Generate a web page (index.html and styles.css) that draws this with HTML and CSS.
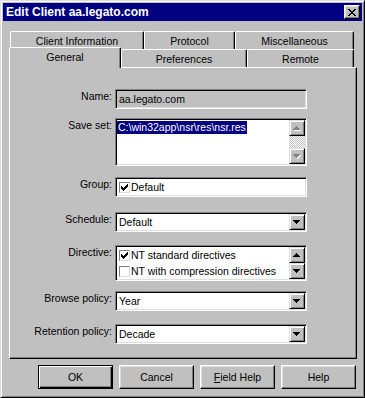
FILE: index.html
```html
<!DOCTYPE html>
<html lang="en">
<head>
    <meta charset="UTF-8">
    <title>Edit Client aa.legato.com</title>
    <link rel="stylesheet" href="styles.css">
</head>
<body>

<div class="window">
    <!-- Barra de titulo -->
    <div class="titlebar">
        <span class="title">Edit Client aa.legato.com</span>
        <span class="close">
            <svg width="8" height="7" viewBox="0 0 8 7" shape-rendering="crispEdges"><path d="M0 0h2v1H0z M6 0h2v1H6z M1 1h2v1H1z M5 1h2v1H5z M2 2h4v1H2z M3 3h2v1H3z M2 4h4v1H2z M1 5h2v1H1z M5 5h2v1H5z M0 6h2v1H0z M6 6h2v1H6z" fill="#000"/></svg>
        </span>
    </div>

    <!-- Pestanas -->
    <div class="tabs">
        <div class="tab-row back">
            <div class="tab t-client">Client Information</div>
            <div class="tab t-protocol">Protocol</div>
            <div class="tab t-misc">Miscellaneous</div>
        </div>
        <div class="tab-row front">
            <div class="tab t-general selected">General</div>
            <div class="tab t-prefs">Preferences</div>
            <div class="tab t-remote">Remote</div>
        </div>
    </div>

    <!-- Panel del formulario -->
    <div class="panel">
        <div class="row r-name">
            <div class="label">Name:</div>
            <div class="field disabled"><span class="value">aa.legato.com</span></div>
        </div>

        <div class="row r-saveset">
            <div class="label">Save set:</div>
            <div class="field list">
                <div class="items"><span class="highlight">C:\win32app\nsr\res\nsr.res</span></div>
                <div class="scrollbar">
                    <span class="sbtn">
                        <svg width="8" height="5" viewBox="0 0 8 5" shape-rendering="crispEdges"><path d="M4 1h1v1H4z M3 2h3v1H3z M2 3h5v1H2z M1 4h7v1H1z" fill="#fff"/><path d="M3 0h1v1H3z M2 1h3v1H2z M1 2h5v1H1z M0 3h7v1H0z" fill="#808080"/></svg>
                    </span>
                    <span class="track"></span>
                    <span class="sbtn">
                        <svg width="8" height="5" viewBox="0 0 8 5" shape-rendering="crispEdges"><path d="M1 1h7v1H1z M2 2h5v1H2z M3 3h3v1H3z M4 4h1v1H4z" fill="#fff"/><path d="M0 0h7v1H0z M1 1h5v1H1z M2 2h3v1H2z M3 3h1v1H3z" fill="#808080"/></svg>
                    </span>
                </div>
            </div>
        </div>

        <div class="row r-group">
            <div class="label">Group:</div>
            <div class="field list">
                <div class="items">
                    <div class="item"><span class="check on"><svg width="7" height="7" viewBox="0 0 7 7" shape-rendering="crispEdges"><path d="M6 0h1v1H6z M5 1h2v1H5z M0 2h1v1H0z M4 2h3v1H4z M0 3h2v1H0z M3 3h3v1H3z M0 4h5v1H0z M1 5h3v1H1z M2 6h1v1H2z" fill="#000"/></svg></span>Default</div>
                </div>
            </div>
        </div>

        <div class="row r-schedule">
            <div class="label">Schedule:</div>
            <div class="field combo">
                <span class="value">Default</span>
                <span class="drop"><svg width="7" height="4" viewBox="0 0 7 4" shape-rendering="crispEdges"><path d="M0 0h7v1H0z M1 1h5v1H1z M2 2h3v1H2z M3 3h1v1H3z" fill="#000"/></svg></span>
            </div>
        </div>

        <div class="row r-directive">
            <div class="label">Directive:</div>
            <div class="field list">
                <div class="items">
                    <div class="item"><span class="check on"><svg width="7" height="7" viewBox="0 0 7 7" shape-rendering="crispEdges"><path d="M6 0h1v1H6z M5 1h2v1H5z M0 2h1v1H0z M4 2h3v1H4z M0 3h2v1H0z M3 3h3v1H3z M0 4h5v1H0z M1 5h3v1H1z M2 6h1v1H2z" fill="#000"/></svg></span>NT standard directives</div>
                    <div class="item"><span class="check"></span>NT with compression directives</div>
                </div>
                <div class="scrollbar">
                    <span class="sbtn">
                        <svg width="7" height="4" viewBox="0 0 7 4" shape-rendering="crispEdges"><path d="M3 0h1v1H3z M2 1h3v1H2z M1 2h5v1H1z M0 3h7v1H0z" fill="#000"/></svg>
                    </span>
                    <span class="sbtn">
                        <svg width="7" height="4" viewBox="0 0 7 4" shape-rendering="crispEdges"><path d="M0 0h7v1H0z M1 1h5v1H1z M2 2h3v1H2z M3 3h1v1H3z" fill="#000"/></svg>
                    </span>
                </div>
            </div>
        </div>

        <div class="row r-browse">
            <div class="label">Browse policy:</div>
            <div class="field combo">
                <span class="value">Year</span>
                <span class="drop"><svg width="7" height="4" viewBox="0 0 7 4" shape-rendering="crispEdges"><path d="M0 0h7v1H0z M1 1h5v1H1z M2 2h3v1H2z M3 3h1v1H3z" fill="#000"/></svg></span>
            </div>
        </div>

        <div class="row r-retention">
            <div class="label">Retention policy:</div>
            <div class="field combo">
                <span class="value">Decade</span>
                <span class="drop"><svg width="7" height="4" viewBox="0 0 7 4" shape-rendering="crispEdges"><path d="M0 0h7v1H0z M1 1h5v1H1z M2 2h3v1H2z M3 3h1v1H3z" fill="#000"/></svg></span>
            </div>
        </div>
    </div>

    <!-- Botones -->
    <div class="buttons">
        <button class="btn default">OK</button>
        <button class="btn">Cancel</button>
        <button class="btn"><u>F</u>ield Help</button>
        <button class="btn">Help</button>
    </div>
</div>

</body>
</html>
```

FILE: styles.css
```css
body {
    margin: 0;
    background: #c0c0c0;
    font-family: "Liberation Sans", Arial, sans-serif;
    font-size: 10.5px;
    color: #000;
}

/* Ventana */
.window {
    width: 365px;
    height: 398px;
    box-sizing: border-box;
    border: 1px solid;
    border-color: #dfdfdf #000 #000 #dfdfdf;
    box-shadow: inset 1px 1px #fff, inset -1px -1px #808080;
    padding: 2px;
    display: flex;
    flex-direction: column;
    background: #c0c0c0;
}

.titlebar {
    height: 18px;
    background: #000080;
    display: flex;
    align-items: center;
    justify-content: space-between;
    padding: 0 2px 0 3px;
}

.title {
    color: #fff;
    font-weight: bold;
    font-size: 12px;
    line-height: 18px;
}

.close {
    width: 16px;
    height: 14px;
    box-sizing: border-box;
    border: 1px solid;
    border-color: #fff #000 #000 #fff;
    box-shadow: inset -1px -1px #808080, inset 1px 1px #dfdfdf;
    background: #c0c0c0;
    display: flex;
    align-items: center;
    justify-content: center;
}

.close svg {
    margin-left: -1px;
}

/* Pestanas */
.tabs {
    margin-top: 10px;
    padding-left: 6px;
}

.tab-row {
    display: flex;
    height: 18px;
    align-items: flex-start;
}

.tab-row.back {
    padding-left: 1px;
}

.tab {
    height: 18px;
    box-sizing: border-box;
    border-top: 1px solid #fff;
    border-left: 1px solid #fff;
    border-right: 1px solid #000;
    border-radius: 2px 2px 0 0;
    box-shadow: inset -1px 0 #808080;
    background: #c0c0c0;
    text-align: center;
    padding-top: 2px;
    line-height: 14px;
    white-space: nowrap;
}

.t-client { width: 134px; }
.t-protocol { width: 91px; }
.t-misc { width: 119px; }
.t-general { width: 112px; }
.t-prefs { width: 126px; }
.t-remote { width: 107px; }

.tab.selected {
    position: relative;
    z-index: 1;
    height: 21px;
    margin-top: -2px;
}

/* Panel */
.panel {
    width: 348px;
    height: 292px;
    margin-left: 6px;
    box-sizing: border-box;
    border: 1px solid;
    border-color: #fff #000 #000 #fff;
    box-shadow: inset -1px -1px #808080;
    padding-top: 21px;
}

.row {
    display: flex;
    gap: 3px;
}

.label {
    width: 102px;
    text-align: right;
    padding-top: 1px;
    line-height: 13px;
    white-space: nowrap;
}

.r-saveset { margin-top: 9px; }
.r-group { margin-top: 11px; }
.r-schedule { margin-top: 15px; }
.r-directive { margin-top: 13px; }
.r-browse { margin-top: 10px; }
.r-retention { margin-top: 13px; }

.r-name .field,
.r-schedule .field,
.r-browse .field,
.r-retention .field,
.r-group .field { height: 20px; }
.r-saveset .field { height: 48px; }
.r-directive .field { height: 36px; }

/* Campos hundidos */
.field {
    width: 192px;
    box-sizing: border-box;
    border: 1px solid;
    border-color: #808080 #fff #fff #808080;
    box-shadow: inset 1px 1px #000, inset -1px -1px #dfdfdf;
    background: #fff;
    padding: 1px;
    display: flex;
}

.field.disabled {
    background: #c0c0c0;
}

.value {
    flex: 1;
    padding-left: 2px;
    line-height: 16px;
    white-space: nowrap;
}

.drop,
.sbtn {
    width: 16px;
    height: 16px;
    box-sizing: border-box;
    border: 1px solid;
    border-color: #dfdfdf #000 #000 #dfdfdf;
    box-shadow: inset 1px 1px #fff, inset -1px -1px #808080;
    background: #c0c0c0;
    display: flex;
    align-items: center;
    justify-content: center;
    flex-shrink: 0;
}

.drop svg,
.sbtn svg {
    margin-left: -1px;
}

/* Listas */
.items {
    flex: 1;
    min-width: 0;
}

.highlight {
    display: inline-block;
    margin-top: 1px;
    padding: 0 1px;
    background: #000080;
    color: #fff;
    line-height: 13px;
}

.item {
    display: flex;
    align-items: center;
    height: 16px;
    padding-left: 2px;
    white-space: nowrap;
}

.check {
    width: 11px;
    height: 11px;
    box-sizing: border-box;
    border: 1px solid;
    border-color: #808080 #dfdfdf #dfdfdf #808080;
    background: #fff;
    margin-right: 1px;
    display: flex;
    align-items: center;
    justify-content: center;
}

.scrollbar {
    display: flex;
    flex-direction: column;
    width: 16px;
}

.track {
    flex: 1;
    background: repeating-conic-gradient(#c0c0c0 0 25%, #fff 0 50%) 0 0 / 2px 2px;
}

/* Botones */
.buttons {
    display: flex;
    justify-content: flex-end;
    gap: 6px;
    padding-right: 6px;
    margin-top: 6px;
}

.btn {
    width: 75px;
    height: 24px;
    box-sizing: border-box;
    border: 1px solid;
    border-color: #fff #000 #000 #fff;
    box-shadow: inset -1px -1px #808080, inset 1px 1px #dfdfdf;
    background: #c0c0c0;
    font-family: "Liberation Sans", Arial, sans-serif;
    font-size: 10.5px;
    color: #000;
    padding: 0;
}

.btn.default {
    border-color: #000;
    box-shadow: inset 1px 1px #fff, inset -1px -1px #000, inset -2px -2px #808080;
}
```
